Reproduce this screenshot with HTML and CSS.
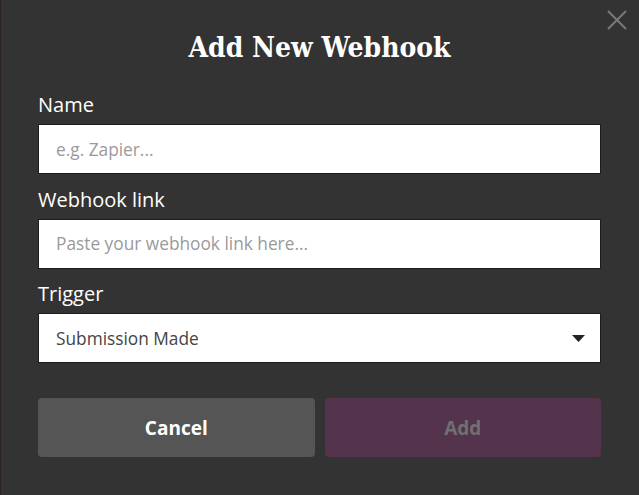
FILE: index.html
```html
<!DOCTYPE html>
<html lang="en">
<head>
<meta charset="utf-8">
<title>Add New Webhook</title>
<link rel="stylesheet" href="styles.css">
</head>
<body>
<div class="modal">
  <button class="close" type="button" aria-label="Close">
    <svg width="20" height="20" viewBox="0 0 20 20"><path d="M1 1 L19 19 M19 1 L1 19" stroke="#7a7a7a" stroke-width="2" fill="none"/></svg>
  </button>
  <h1 class="title">Add New Webhook</h1>
  <form class="form">
    <div class="field">
      <label class="label" for="name">Name</label>
      <input class="input" id="name" type="text" placeholder="e.g. Zapier...">
    </div>
    <div class="field">
      <label class="label" for="link">Webhook link</label>
      <input class="input" id="link" type="text" placeholder="Paste your webhook link here...">
    </div>
    <div class="field field-last">
      <label class="label">Trigger</label>
      <div class="select">
        <span class="select-value">Submission Made</span>
        <svg class="caret" width="13" height="7" viewBox="0 0 13 7"><path d="M0 0 H13 L6.5 7 Z" fill="#222"/></svg>
      </div>
    </div>
    <div class="actions">
      <button class="btn btn-cancel" type="button">Cancel</button>
      <button class="btn btn-add" type="button">Add</button>
    </div>
  </form>
</div>
</body>
</html>
```
FILE: styles.css
```css
html, body {
  margin: 0;
  padding: 0;
  background: #333333;
}
body {
  font-family: "Open Sans", "Noto Sans", sans-serif;
  width: 639px;
  height: 495px;
  overflow: hidden;
}
.modal {
  position: relative;
  box-sizing: border-box;
  height: 495px;
  padding: 30px 38px 0 37px;
  border-left: 1px solid #2b2228;
}
.close {
  position: absolute;
  top: 10px;
  right: 12px;
  width: 20px;
  height: 20px;
  padding: 0;
  border: 0;
  background: none;
}
.close svg { display: block; }
.title {
  margin: 0;
  text-align: center;
  font-family: "DejaVu Serif Condensed", "DejaVu Serif", serif;
  font-stretch: condensed;
  font-weight: bold;
  font-size: 28px;
  line-height: 36px;
  color: #ffffff;
}
.form {
  margin-top: 25px;
}
.field {
  display: flex;
  flex-direction: column;
  margin-bottom: 11.5px;
}
.field-last { margin-bottom: 0; }
.label {
  display: block;
  font-size: 20px;
  line-height: 27px;
  color: #ffffff;
  margin-bottom: 6px;
}
.input, .select {
  box-sizing: border-box;
  width: 563px;
  height: 50px;
  border: 1px solid #1c1c1c;
  background: #ffffff;
  padding: 0 17px;
  font-family: "Open Sans", "Noto Sans", sans-serif;
  font-size: 17.3px;
  color: #444;
  outline: none;
  border-radius: 0;
}
.input::placeholder { color: #9a9a9a; }
.select {
  display: flex;
  align-items: center;
  justify-content: space-between;
  padding-right: 15px;
}
.select-value { color: #444; }
.caret { display: block; }
.actions {
  display: flex;
  gap: 10px;
  margin-top: 35px;
  width: 563px;
}
.btn {
  flex: 1;
  height: 59px;
  border: 0;
  border-radius: 4px;
  font-family: "Open Sans", "Noto Sans", sans-serif;
  font-weight: bold;
  font-size: 19px;
}
.btn-cancel {
  background: #555555;
  color: #ffffff;
}
.btn-add {
  background: #54344d;
  color: #707070;
}
```
